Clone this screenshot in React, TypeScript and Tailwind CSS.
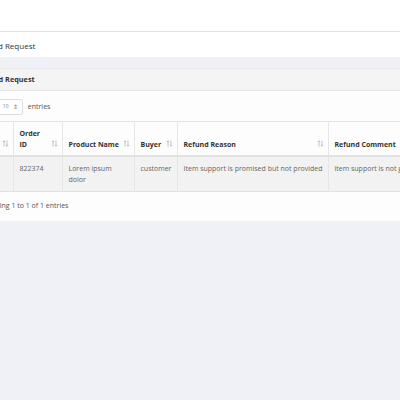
import React from 'react';

// ─── Sort arrows ────────────────────────────────────────────────

const SortIcon: React.FC = () => (
    <svg
        className="absolute right-[4px] bottom-[8px]"
        width="7"
        height="7"
        viewBox="0 0 7 7"
        fill="none"
        stroke="#b4b4b4"
        strokeWidth="0.8"
    >
        <path d="M2 6.5V0.8M0.8 2L2 0.8L3.2 2" />
        <path d="M5 0.5V6.2M3.8 5L5 6.2L6.2 5" />
    </svg>
);

type Col = { label: React.ReactNode; width: string; sort?: boolean };

const columns: Col[] = [
    { label: '#', width: 'w-[31px]', sort: true },
    { label: <>Order<br />ID</>, width: 'w-[49px]', sort: true },
    { label: 'Product Name', width: 'w-[72px]', sort: true },
    { label: 'Buyer', width: 'w-[43px]', sort: true },
    { label: 'Refund Reason', width: 'w-[151px]', sort: true },
    { label: 'Refund Comment', width: 'w-[140px]', sort: true },
];

const row = ['1', '822374', <>Lorem ipsum<br />dolor</>, 'customer', 'Item support is promised but not provided', 'item support is not given'];

export default function App() {
    return (
        <div
            className="w-[400px] h-[400px] overflow-hidden bg-[#f0f1f6] text-[#555]"
            style={{ fontFamily: '"Open Sans", "Noto Sans", sans-serif' }}
        >
            {/* top navbar */}
            <div className="h-[32px] bg-white border-b border-[#e1e2e8] shadow-[0_1px_2px_rgba(0,0,0,0.06)]" />

            <div className="-ml-[30px] w-[640px]">
                {/* page title bar */}
                <div className="h-[25px] bg-white flex items-center pl-[6px] pt-[2px] text-[8px] text-[#333]">
                    Refund Request
                </div>

                {/* card */}
                <div className="mt-[11px] bg-white border-t border-[#e8e8e8]">
                    <div className="h-[22px] bg-[#f4f4f4] border-b border-[#e6e6e6] flex items-center pl-[7px] text-[7.3px] font-bold text-[#333]">
                        Refund Request
                    </div>

                    <div className="px-[12px] pt-[8px] pb-[10px] bg-[#fdfdfd]">
                        <div className="-ml-[13px] flex items-center gap-[3px] text-[7px] h-[16px]">
                            <span>Show</span>
                            <div className="flex items-center gap-[4px] h-[16px] w-[33px] border border-[#dcdcdc] rounded-[3px] bg-white pl-[12px] text-[5px] text-[#777]">
                                <span>10</span>
                                <span className="text-[6px] leading-none">⇕</span>
                            </div>
                            <span className="ml-[2px]">entries</span>
                        </div>

                        <table className="mt-[6px] table-fixed border-collapse text-[7px] leading-[11px]">
                            <thead>
                                <tr className="border-t border-[#e2e2e2]">
                                    {columns.map((c, i) => (
                                        <th
                                            key={i}
                                            className={`${c.width} relative h-[34px] align-bottom text-left font-bold text-[#333] pl-[6px] pr-[12px] pb-[5px] border-l border-[#e6e6e6] border-b-2 border-b-[#e2e2e2] first:border-l-0`}
                                        >
                                            {c.label}
                                            {c.sort && <SortIcon />}
                                        </th>
                                    ))}
                                </tr>
                            </thead>
                            <tbody>
                                <tr className="bg-[#f2f2f2] border-b border-[#e2e2e2]">
                                    {row.map((v, i) => (
                                        <td
                                            key={i}
                                            className="align-top text-left text-[#666] pl-[6px] pr-[4px] pt-[6px] pb-[6px] border-l border-[#e6e6e6] first:border-l-0 whitespace-nowrap"
                                        >
                                            {v}
                                        </td>
                                    ))}
                                </tr>
                            </tbody>
                        </table>

                        <div className="mt-[9px] text-[7px] text-[#555]">Showing 1 to 1 of 1 entries</div>
                    </div>
                </div>
            </div>
        </div>
    );
}
